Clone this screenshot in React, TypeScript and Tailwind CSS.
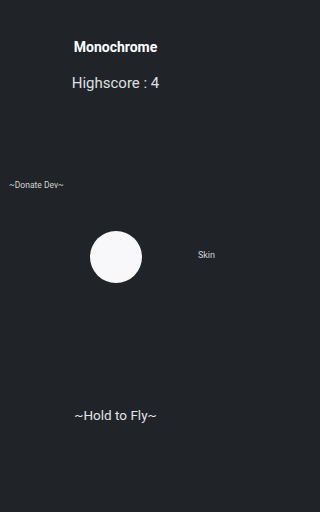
export default function App() {
  return (
    <div className="min-h-[512px] w-full bg-[#202327]">
      <div
        className="flex h-[512px] w-[231px] flex-col overflow-hidden bg-[#202327] text-[#e4e5e7]"
        style={{ fontFamily: 'Roboto, "Liberation Sans", sans-serif' }}
      >
        <div className="pt-[38px] text-center text-[14px] font-bold leading-[18px] text-white">Monochrome</div>
        <div className="mt-[16px] text-center text-[15px] leading-[22px] text-[#dfe0e2]">Highscore : 4</div>

        <div className="mt-[86px] grid grid-cols-[1fr_52px_1fr] items-start">
          <div className="pl-[9px] text-[8.5px] leading-[11px] text-[#d2d4d7]">~Donate Dev~</div>
          <div className="mt-[51px] h-[52px] w-[52px] rounded-full bg-[#f8f8fa]" />
          <div className="mt-[70px] flex justify-end pr-[16px] text-[9px] leading-[11px] text-[#d2d4d7]">Skin</div>
        </div>

        <div className="mt-[123px] text-center text-[13.5px] leading-[18px] text-[#e4e5e7]">~Hold to Fly~</div>
      </div>
    </div>
  )
}
